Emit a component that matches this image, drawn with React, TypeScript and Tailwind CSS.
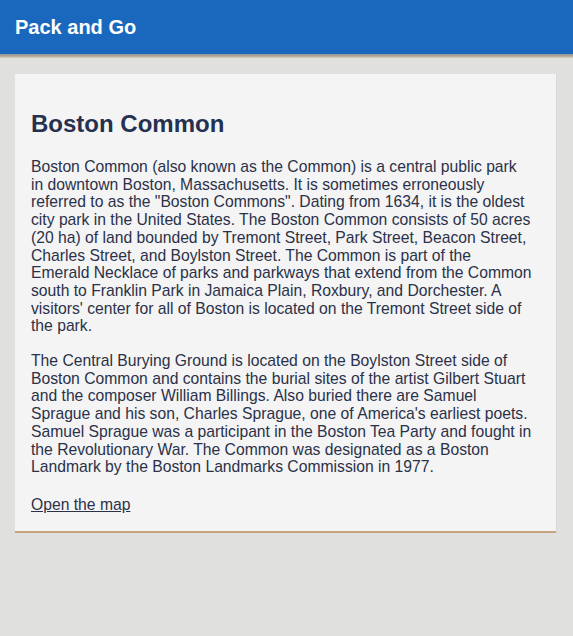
const para1 = [
  'Boston Common (also known as the Common) is a central public park',
  'in downtown Boston, Massachusetts. It is sometimes erroneously',
  'referred to as the "Boston Commons". Dating from 1634, it is the oldest',
  'city park in the United States. The Boston Common consists of 50 acres',
  '(20 ha) of land bounded by Tremont Street, Park Street, Beacon Street,',
  'Charles Street, and Boylston Street. The Common is part of the',
  'Emerald Necklace of parks and parkways that extend from the Common',
  'south to Franklin Park in Jamaica Plain, Roxbury, and Dorchester. A',
  "visitors' center for all of Boston is located on the Tremont Street side of",
  'the park.',
];

const para2 = [
  'The Central Burying Ground is located on the Boylston Street side of',
  'Boston Common and contains the burial sites of the artist Gilbert Stuart',
  'and the composer William Billings. Also buried there are Samuel',
  "Sprague and his son, Charles Sprague, one of America's earliest poets.",
  'Samuel Sprague was a participant in the Boston Tea Party and fought in',
  'the Revolutionary War. The Common was designated as a Boston',
  'Landmark by the Boston Landmarks Commission in 1977.',
];

// keeps the line breaks of the original layout
function Lines({ lines }: { lines: string[] }) {
  return (
    <>
      {lines.map((line, i) => (
        <span key={i}>
          {line}
          {i < lines.length - 1 && <br />}
        </span>
      ))}
    </>
  );
}

export default function App() {
  return (
    <div className="min-h-[636px] bg-[#e0e1de] font-['Liberation_Sans',Arial,sans-serif] text-[#2b3149]">
      <header className="h-[54px] bg-[#1a68bd] flex items-center px-[15px]">
        <h1 className="text-[20px] font-bold text-white">Pack and Go</h1>
      </header>
      <div className="h-[4px] bg-[linear-gradient(#8c9aa6_0,#b9a487_50%,#cfd2cf_100%)]" />
      <main className="px-[15px] pt-[16px] pr-[17px]">
        <article className="bg-[#f4f4f4] pl-[16px] pr-[2px] pt-[36px] pb-[14px] border-b-2 border-[#c4a57e] shadow-[1px_0_0_#d8d8d8]">
          <h2 className="text-[24px] leading-[28px] font-bold text-[#26304f] mb-[20px]">Boston Common</h2>
          <p className="text-[15.7px] leading-[17.7px] mb-[17px] whitespace-nowrap">
            <Lines lines={para1} />
          </p>
          <p className="text-[15.7px] leading-[17.7px] mb-[17px] whitespace-nowrap">
            <Lines lines={para2} />
          </p>
          <a href="#" className="text-[15.7px] leading-[17.7px] underline text-[#2b3149]">Open the map</a>
        </article>
      </main>
    </div>
  );
}
